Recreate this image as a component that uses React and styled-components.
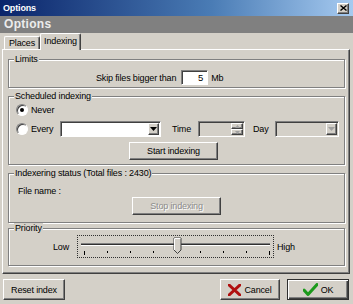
import React from 'react';
import styled, { createGlobalStyle, css } from 'styled-components';

const GlobalStyle = createGlobalStyle`
  body { margin: 0; background: #d4d0c8; }
  * { box-sizing: border-box; }
`;

const raised = css`
  border: 1px solid;
  border-color: #fff #404040 #404040 #fff;
  box-shadow: inset -1px -1px 0 #808080;
`;

const sunken = css`
  border: 1px solid;
  border-color: #808080 #fff #fff #808080;
  box-shadow: inset 1px 1px 0 #404040;
`;

const Window = styled.div`
  width: 353px;
  height: 304px;
  background: #d4d0c8;
  display: flex;
  flex-direction: column;
  font-family: "Liberation Sans", Arial, sans-serif;
  font-size: 9px;
  letter-spacing: -0.15px;
  color: #000;
  overflow: hidden;
`;

const TitleBar = styled.div`
  height: 16px;
  background: linear-gradient(to right, #0a246a, #4a7cb5 60%, #a6caf0);
  display: flex;
  align-items: center;
  justify-content: space-between;
  padding: 0 4px 0 3px;
  color: #fff;
  font-weight: bold;
`;

const CloseButton = styled.div`
  width: 12px;
  height: 11px;
  background: #d4d0c8;
  ${raised};
  display: flex;
  align-items: center;
  justify-content: center;
`;

const Header = styled.div`
  height: 17px;
  background: #808080;
  color: #ececec;
  font-size: 12px;
  font-weight: bold;
  letter-spacing: 0.3px;
  line-height: 17px;
  padding-left: 4px;
`;

const TabStrip = styled.div`
  height: 16px;
  display: flex;
  align-items: flex-end;
  padding-left: 4px;
`;

const Tab = styled.div`
  position: relative;
  z-index: 1;
  width: ${p => p.$w}px;
  height: ${p => (p.$active ? 17 : 13)}px;
  margin-bottom: ${p => (p.$active ? -1 : 0)}px;
  border-top: 1px solid #fff;
  border-left: 1px solid #fff;
  border-right: 1px solid #404040;
  box-shadow: inset -1px 0 0 #808080;
  border-radius: 2px 2px 0 0;
  background: #d4d0c8;
  padding-top: ${p => (p.$active ? 2 : 1)}px;
  text-align: center;
  line-height: 11px;
`;

const Panel = styled.div`
  margin: 0 3px 0 2px;
  height: 225px;
  ${raised};
  padding: 9px 4px 0 5px;
  display: flex;
  flex-direction: column;
`;

const Group = styled.div`
  position: relative;
  height: ${p => p.$h}px;
  margin-top: ${p => p.$gap || 0}px;
  border: 1px solid #808080;
  box-shadow: inset 1px 1px 0 #fff, 1px 1px 0 #fff;
  display: flex;
  flex-direction: column;
  padding: ${p => p.$pad};
`;

const Legend = styled.span`
  position: absolute;
  top: -6px;
  left: 5px;
  padding: 0 1px;
  background: #d4d0c8;
  line-height: 11px;
`;

const Row = styled.div`
  display: flex;
  align-items: center;
  height: ${p => p.$h || 16}px;
  margin-top: ${p => p.$mt || 0}px;
`;

const Label = styled.span`
  display: inline-block;
  width: ${p => (p.$w ? `${p.$w}px` : 'auto')};
  padding-left: ${p => p.$pl || 0}px;
  flex-shrink: 0;
  white-space: nowrap;
`;

const TextBox = styled.div`
  width: ${p => p.$w}px;
  height: 15px;
  ${sunken};
  background: #fff;
  text-align: right;
  padding-right: 4px;
  line-height: 13px;
  font-size: 9.5px;
  margin: 0 3px 0 5px;
`;

const Radio = styled.span`
  width: 12px;
  height: 12px;
  border-radius: 50%;
  border: 1px solid;
  border-color: #808080 #fff #fff #808080;
  box-shadow: inset 1px 1px 0 #404040;
  background: #fff;
  display: inline-flex;
  align-items: center;
  justify-content: center;
  margin-right: 3px;
  flex-shrink: 0;
  &::after {
    content: '';
    width: 4px;
    height: 4px;
    border-radius: 50%;
    background: ${p => (p.$checked ? '#000' : 'transparent')};
  }
`;

const Combo = styled.div`
  width: ${p => p.$w}px;
  height: 16px;
  ${sunken};
  background: ${p => (p.$disabled ? '#d4d0c8' : '#fff')};
  display: flex;
  justify-content: flex-end;
  align-items: flex-start;
  padding: 1px 1px 0 0;
  flex-shrink: 0;
`;

const DropButton = styled.div`
  width: 11px;
  height: 12px;
  background: #d4d0c8;
  ${raised};
  display: flex;
  align-items: center;
  justify-content: center;
`;

const SpinStack = styled.div`
  display: flex;
  flex-direction: column;
`;

const SpinButton = styled(DropButton)`
  width: 12px;
  height: 6px;
`;

const PushButton = styled.div`
  width: ${p => p.$w}px;
  height: ${p => p.$h || 18}px;
  margin-top: ${p => p.$mt || 0}px;
  margin-left: ${p => p.$ml || 0}px;
  background: #d4d0c8;
  ${p => (p.$default
    ? css`
        border: 1px solid #303030;
        box-shadow: inset 1px 1px 0 #fff, inset -1px -1px 0 #404040, inset -2px -2px 0 #808080;
      `
    : raised)};
  display: flex;
  align-items: center;
  justify-content: center;
  gap: 3px;
  flex-shrink: 0;
  color: ${p => (p.$disabled ? '#8c8c8c' : '#000')};
  text-shadow: ${p => (p.$disabled ? '1px 1px 0 #fff' : 'none')};
`;

const SliderBox = styled.div`
  width: 197px;
  height: 23px;
  border: 1px dotted #303030;
  margin-right: 3px;
  flex-shrink: 0;
  display: flex;
`;

const BottomBar = styled.div`
  display: flex;
  align-items: flex-start;
  padding: 5px 4px 0 3px;
  gap: 7px;
`;

const Spacer = styled.div`
  flex: 1;
`;

const Arrow = ({ color = '#000' }) => (
  <svg width="7" height="4" viewBox="0 0 7 4">
    <polygon points="0,0 7,0 3.5,4" fill={color} />
  </svg>
);

const SmallArrow = ({ up }) => (
  <svg width="5" height="3" viewBox="0 0 5 3">
    <polygon points={up ? '0,3 5,3 2.5,0' : '0,0 5,0 2.5,3'} fill="#a0a0a0" />
  </svg>
);

const Slider = () => {
  const ticks = Array.from({ length: 9 }, (_, i) => 6 + i * 23.1);
  return (
    <svg width="195" height="21" viewBox="0 0 195 21">
      <rect x="3" y="7" width="189" height="1" fill="#808080" />
      <rect x="3" y="8" width="189" height="1" fill="#303030" />
      <rect x="3" y="9" width="189" height="1" fill="#fff" />
      {ticks.map(x => (
        <rect key={x} x={Math.round(x)} y="15" width="1" height={x < 10 || x > 190 ? 4 : 2} fill="#000" />
      ))}
      <polygon points="96,2 103,2 103,14 99.5,17.5 96,14" fill="#d4d0c8" stroke="#404040" strokeWidth="1" />
      <polyline points="96.5,14 96.5,2.5 102.5,2.5" fill="none" stroke="#fff" strokeWidth="1" />
    </svg>
  );
};

const CrossIcon = () => (
  <svg width="13" height="12" viewBox="0 0 13 12">
    <path d="M1 1 L12 11 M12 1 L1 11" stroke="#b01010" strokeWidth="3" strokeLinecap="round" />
  </svg>
);

const CheckIcon = () => (
  <svg width="15" height="13" viewBox="0 0 15 13">
    <path d="M1 7 L5 11.5 L14 1.5" fill="none" stroke="#1c9a1c" strokeWidth="3" strokeLinejoin="round" strokeLinecap="round" />
  </svg>
);

export default function App() {
  return (
    <>
      <GlobalStyle />
      <Window>
        <TitleBar>
          <span>Options</span>
          <CloseButton>
            <svg width="7" height="6" viewBox="0 0 7 6">
              <path d="M0.5 0.5 L6.5 5.5 M6.5 0.5 L0.5 5.5" stroke="#000" strokeWidth="1.4" />
            </svg>
          </CloseButton>
        </TitleBar>
        <Header>Options</Header>
        <TabStrip>
          <Tab $w={36}>Places</Tab>
          <Tab $w={41} $active>Indexing</Tab>
        </TabStrip>
        <Panel>
          <Group $h={29} $pad="10px 0 0 87px">
            <Legend>Limits</Legend>
            <Row $h={15}>
              <Label>Skip files bigger than</Label>
              <TextBox $w={27}>5</TextBox>
              <Label>Mb</Label>
            </Row>
          </Group>

          <Group $h={69} $gap={8} $pad="6px 0 0 7px">
            <Legend>Scheduled indexing</Legend>
            <Row $h={13}>
              <Radio $checked />
              <Label>Never</Label>
            </Row>
            <Row $mt={5}>
              <Radio />
              <Label $w={29}>Every</Label>
              <Combo $w={101}>
                <DropButton><Arrow /></DropButton>
              </Combo>
              <Label $w={37} $pl={11}>Time</Label>
              <Combo $w={47} $disabled>
                <SpinStack>
                  <SpinButton><SmallArrow up /></SpinButton>
                  <SpinButton><SmallArrow /></SpinButton>
                </SpinStack>
              </Combo>
              <Label $w={30} $pl={8}>Day</Label>
              <Combo $w={64} $disabled>
                <DropButton><Arrow color="#a0a0a0" /></DropButton>
              </Combo>
            </Row>
            <PushButton $w={89} $mt={5} $ml={113}>Start indexing</PushButton>
          </Group>

          <Group $h={50} $gap={8} $pad="11px 0 0 9px">
            <Legend>Indexering status (Total files : 2430)</Legend>
            <Row $h={11}>
              <Label>File name :</Label>
            </Row>
            <PushButton $w={89} $mt={1} $ml={114} $disabled>Stop indexing</PushButton>
          </Group>

          <Group $h={38} $gap={5} $pad="6px 0 0 44px">
            <Legend>Priority</Legend>
            <Row $h={23}>
              <Label $w={24}>Low</Label>
              <SliderBox><Slider /></SliderBox>
              <Label>High</Label>
            </Row>
          </Group>
        </Panel>
        <BottomBar>
          <PushButton $w={62} $h={21}>Reset index</PushButton>
          <Spacer />
          <PushButton $w={60} $h={21}>
            <CrossIcon />
            <span>Cancel</span>
          </PushButton>
          <PushButton $w={62} $h={21} $default>
            <CheckIcon />
            <span>OK</span>
          </PushButton>
        </BottomBar>
      </Window>
    </>
  );
}
